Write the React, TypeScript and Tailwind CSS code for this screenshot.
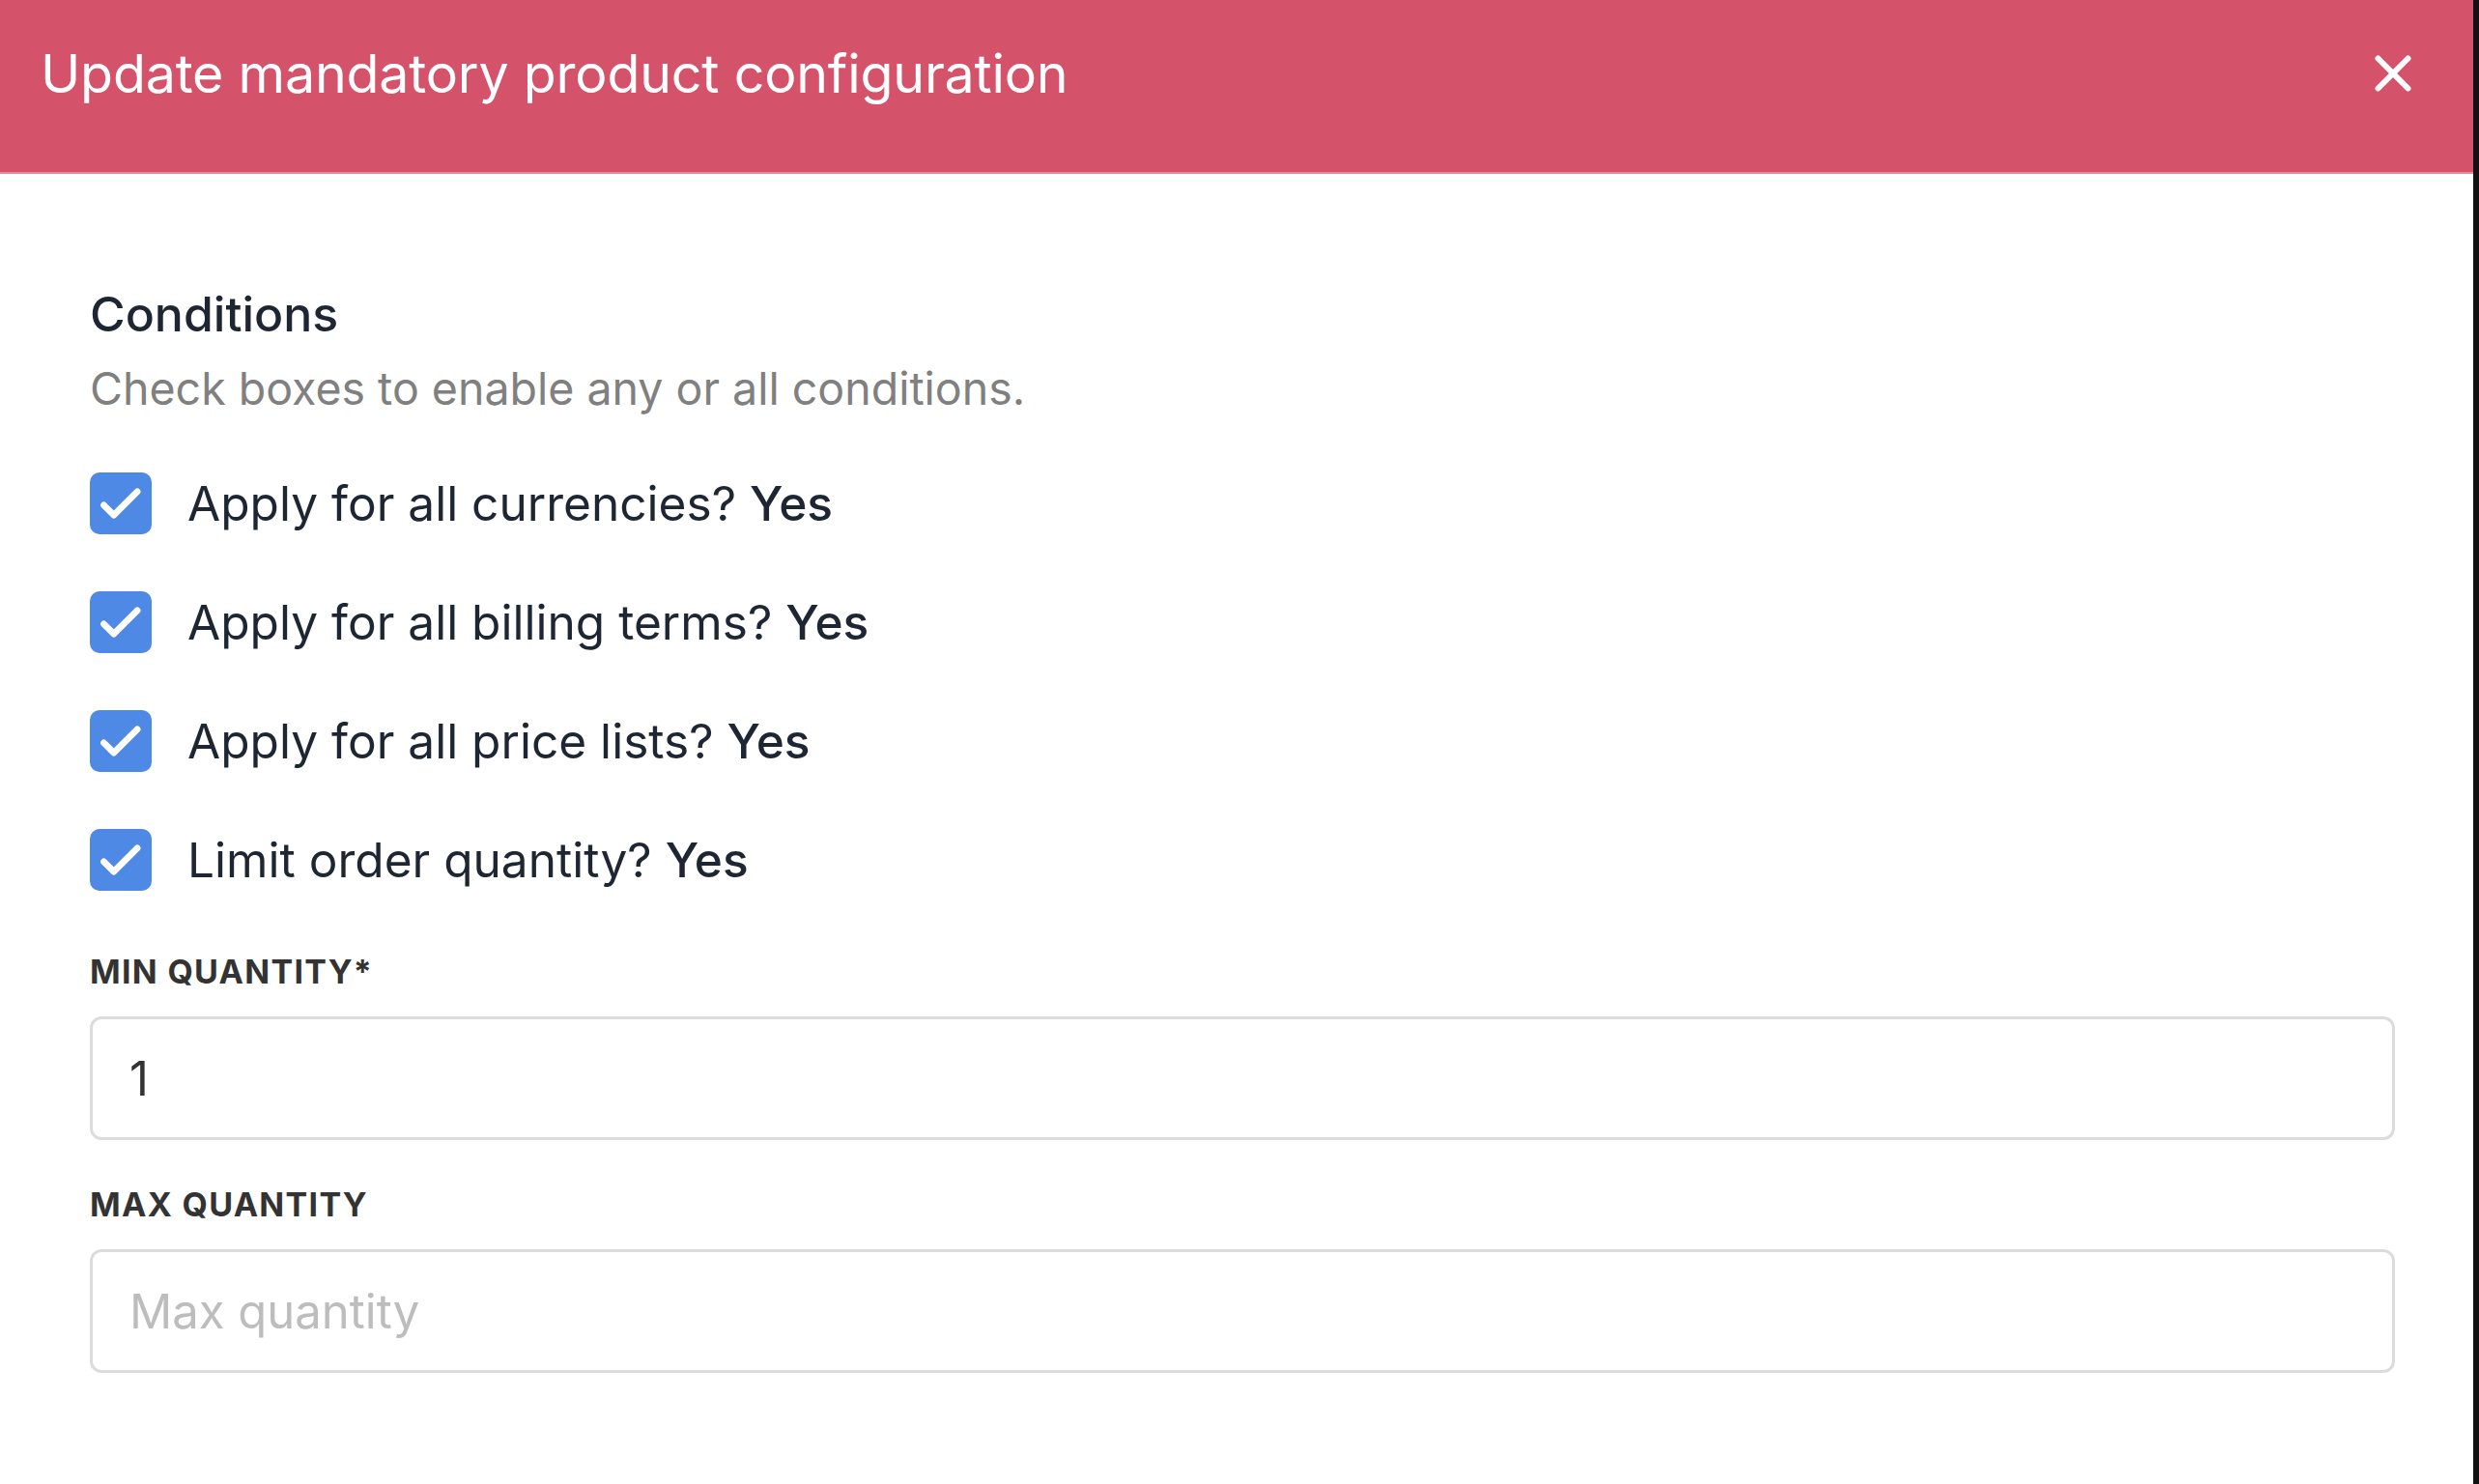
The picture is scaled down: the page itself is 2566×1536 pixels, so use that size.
import React, { useState } from 'react';
import { X } from 'lucide-react';

const font = { fontFamily: 'Inter, "Noto Sans", "Liberation Sans", sans-serif' };

interface Condition {
  id: string;
  label: string;
}

const conditions: Condition[] = [
  { id: 'currencies', label: 'Apply for all currencies?' },
  { id: 'billing', label: 'Apply for all billing terms?' },
  { id: 'priceLists', label: 'Apply for all price lists?' },
  { id: 'quantity', label: 'Limit order quantity?' },
];

const CheckBox: React.FC<{ checked: boolean; onClick: () => void }> = ({ checked, onClick }) => (
  <button
    type="button"
    onClick={onClick}
    className={`w-[64px] h-[64px] rounded-[10px] flex items-center justify-center shrink-0 ${
      checked ? 'bg-[#4f89e6]' : 'bg-white border-2 border-gray-300'
    }`}
  >
    {checked && (
      <svg width="54" height="54" viewBox="0 0 24 24" fill="none">
        <path d="M4.2 12.8l4.6 4.6L19.6 6.6" stroke="white" strokeWidth="3" strokeLinecap="round" strokeLinejoin="round" />
      </svg>
    )}
  </button>
);

export default function App() {
  const [checked, setChecked] = useState<Record<string, boolean>>({
    currencies: true,
    billing: true,
    priceLists: true,
    quantity: true,
  });
  const [minQty, setMinQty] = useState('1');
  const [maxQty, setMaxQty] = useState('');

  const toggle = (id: string) => setChecked(prev => ({ ...prev, [id]: !prev[id] }));

  return (
    <div className="w-[2566px] h-[1536px] flex bg-[#111111]" style={font}>
      <div className="w-[2560px] h-full bg-white flex flex-col">
        <div className="h-[180px] bg-[#d5536a] border-b-2 border-[#e08a9a] flex items-center justify-between pl-[42px] pr-[52px] pb-[26px] shrink-0">
          <h2 className="text-white text-[55.5px] font-normal leading-none tracking-[-0.2px]">
            Update mandatory product configuration
          </h2>
          <button className="text-white">
            <X size={62} strokeWidth={2.3} />
          </button>
        </div>

        <div className="flex flex-col px-[93px] pr-[81px] pt-[116px]">
          <h3 className="text-[50px] leading-[58px] font-medium text-[#1f2633]">Conditions</h3>
          <p className="mt-[22px] text-[46.5px] leading-[52px] text-[#808080]">
            Check boxes to enable any or all conditions.
          </p>

          <div className="mt-[61px] flex flex-col gap-[59px]">
            {conditions.map(c => (
              <div key={c.id} className="flex items-center gap-[37px] h-[64px]">
                <CheckBox checked={checked[c.id]} onClick={() => toggle(c.id)} />
                <span className="text-[49.6px] text-[#1f2633]">
                  {c.label} <span className="font-medium">{checked[c.id] ? 'Yes' : 'No'}</span>
                </span>
              </div>
            ))}
          </div>

          <label className="mt-[64px] text-[34px] leading-[40px] font-bold tracking-[1.3px] text-[#333333]">
            MIN QUANTITY*
          </label>
          <input
            value={minQty}
            onChange={e => setMinQty(e.target.value)}
            className="mt-[26px] h-[128px] w-full rounded-[12px] border-[3px] border-[#dcdcdc] px-[38px] text-[49px] text-[#333333] outline-none"
          />

          <label className="mt-[47px] text-[34px] leading-[40px] font-bold tracking-[1.3px] text-[#333333]">
            MAX QUANTITY
          </label>
          <input
            value={maxQty}
            onChange={e => setMaxQty(e.target.value)}
            placeholder="Max quantity"
            className="mt-[26px] h-[128px] w-full rounded-[12px] border-[3px] border-[#dcdcdc] px-[38px] text-[49px] text-[#333333] placeholder:text-[#bdbdbd] outline-none"
          />
        </div>
      </div>
    </div>
  );
}
